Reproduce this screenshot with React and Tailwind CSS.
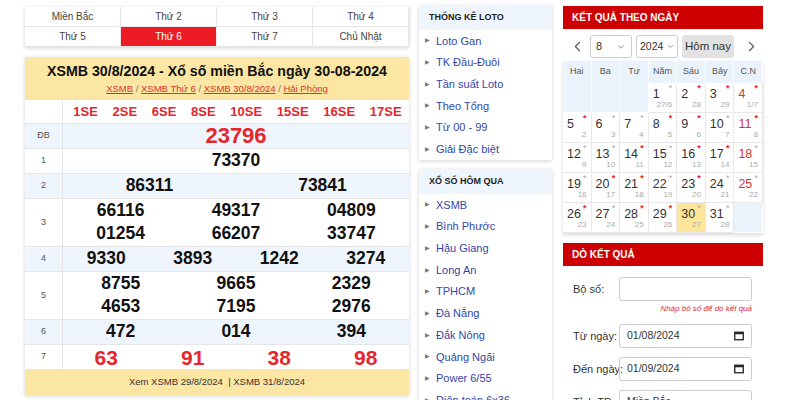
import { ChevronLeft, ChevronRight, ChevronDown } from 'lucide-react';

const font = { fontFamily: '"Liberation Sans", Arial, sans-serif' };

const tabs = ['Miền Bắc', 'Thứ 2', 'Thứ 3', 'Thứ 4', 'Thứ 5', 'Thứ 6', 'Thứ 7', 'Chủ Nhật'];
const codes = ['1SE', '2SE', '6SE', '8SE', '10SE', '15SE', '16SE', '17SE'];

const rows = [
  { label: 'ĐB', lines: [['23796']], cls: 'text-[22px] text-[#e4262d]', bg: 'bg-[#eef5fc]', h: 'h-[25px]' },
  { label: '1', lines: [['73370']], h: 'h-[25px]' },
  { label: '2', lines: [['86311', '73841']], bg: 'bg-[#eef5fc]', h: 'h-[25px]' },
  { label: '3', lines: [['66116', '49317', '04809'], ['01254', '66207', '33747']], h: 'h-[48px]' },
  { label: '4', lines: [['9330', '3893', '1242', '3274']], bg: 'bg-[#eef5fc]', h: 'h-[25px]' },
  { label: '5', lines: [['8755', '9665', '2329'], ['4653', '7195', '2976']], h: 'h-[48px]' },
  { label: '6', lines: [['472', '014', '394']], bg: 'bg-[#eef5fc]', h: 'h-[25px]' },
  { label: '7', lines: [['63', '91', '38', '98']], cls: 'text-[21px] text-[#e4262d]', h: 'h-[25px]' },
];

const loto = ['Loto Gan', 'TK Đầu-Đuôi', 'Tần suất Loto', 'Theo Tổng', 'Từ 00 - 99', 'Giải Đặc biệt'];
const homqua = ['XSMB', 'Bình Phước', 'Hậu Giang', 'Long An', 'TPHCM', 'Đà Nẵng', 'Đắk Nông', 'Quảng Ngãi', 'Power 6/55', 'Điện toán 6x36'];

const redDots = [2, 3, 4, 5, 8, 9, 11, 14, 16, 17, 20, 21, 23, 26, 28, 29];

function lunar(d) {
  if (d === 1) return '27/6';
  if (d === 2) return '28';
  if (d === 3) return '29';
  if (d === 4) return '1/7';
  return String(d - 3);
}

function Panel({ title, items }) {
  return (
    <div className="bg-white shadow-[0_1px_4px_rgba(0,0,0,0.18)]">
      <div className="h-[25px] bg-[#eef5fc] flex items-center pl-[10px] text-[9px] font-bold text-[#222]">{title}</div>
      {items.map((t) => (
        <div key={t} className="h-[21.7px] flex items-center pl-[6px] text-[11px] text-[#3346a8]">
          <span className="text-[6px] text-[#777] mr-[6px]">▶</span>
          {t}
        </div>
      ))}
    </div>
  );
}

function CalIcon() {
  return (
    <svg width="10" height="10" viewBox="0 0 10 10">
      <rect x="0.75" y="1.25" width="8.5" height="7.5" fill="none" stroke="#222" strokeWidth="1.3" />
      <rect x="0.75" y="1.25" width="8.5" height="2" fill="#222" />
    </svg>
  );
}

export default function App() {
  const cells = [null, null, null];
  for (let d = 1; d <= 31; d++) cells.push(d);
  cells.push(null);

  return (
    <div className="w-[800px] h-[400px] overflow-hidden bg-white flex items-start" style={font}>
      {/* left */}
      <div className="ml-[25px] mt-[7px] w-[384px]">
        <div className="grid grid-cols-4 shadow-[0_1px_4px_rgba(0,0,0,0.18)] bg-white">
          {tabs.map((t) => (
            <div
              key={t}
              className={
                'h-[20px] flex items-center justify-center text-[10px] border-r border-b border-[#e6e6e6] ' +
                (t === 'Thứ 6' ? 'bg-[#ed1c24] text-white' : 'text-[#444]')
              }
            >
              {t}
            </div>
          ))}
        </div>

        <div className="mt-[10px] shadow-[0_1px_4px_rgba(0,0,0,0.18)]">
          <div className="h-[43px] bg-[#fbe6a3] flex flex-col items-center justify-center">
            <div className="text-[14.2px] font-bold text-[#111] leading-none">XSMB 30/8/2024 - Xổ số miền Bắc ngày 30-08-2024</div>
            <div className="mt-[6px] text-[9.5px] text-[#777] leading-none">
              <span className="text-[#d9342b] underline">XSMB</span> /{' '}
              <span className="text-[#d9342b] underline">XSMB Thứ 6</span> /{' '}
              <span className="text-[#d9342b] underline">XSMB 30/8/2024</span> /{' '}
              <span className="text-[#d9342b] underline">Hải Phòng</span>
            </div>
          </div>

          <div className="h-[24px] flex bg-white border-b border-[#e6e6e6]">
            <div className="w-[38px] border-r border-[#e6e6e6]" />
            <div className="flex-1 flex justify-around items-center text-[13px] font-bold text-[#e4262d] pl-[3px]">
              {codes.map((c) => (
                <span key={c}>{c}</span>
              ))}
            </div>
          </div>

          {rows.map((r) => (
            <div key={r.label} className={'flex border-b border-[#e6e6e6] ' + r.h + ' ' + (r.bg || 'bg-white')}>
              <div className="w-[38px] flex items-center justify-center text-[9px] text-[#555] border-r border-[#e6e6e6]">{r.label}</div>
              <div className="flex-1 flex flex-col justify-center">
                {r.lines.map((line, li) => (
                  <div key={li} className={'flex h-[23px] items-center font-bold ' + (r.cls || 'text-[17.5px] text-[#111]')}>
                    {line.map((n, ni) => (
                      <span key={ni} className="flex-1 text-center leading-none">{n}</span>
                    ))}
                  </div>
                ))}
              </div>
            </div>
          ))}

          <div className="h-[25px] bg-[#fbe6a3] flex items-center justify-center text-[9.5px] text-[#333]">
            Xem XSMB 29/8/2024&nbsp;&nbsp;| XSMB 31/8/2024
          </div>
        </div>
      </div>

      {/* middle */}
      <div className="ml-[10px] mt-[5px] w-[133px] flex flex-col gap-[9px]">
        <Panel title="THỐNG KÊ LOTO" items={loto} />
        <Panel title="XỔ SỐ HÔM QUA" items={homqua} />
      </div>

      {/* right */}
      <div className="ml-[11px] mt-[6px] w-[200px]">
        <div className="h-[23px] bg-[#cc0000] flex items-center pl-[9px] text-[10px] font-bold text-white">KẾT QUẢ THEO NGÀY</div>
        <div className="h-[29px] mt-[3px] flex items-center text-[11px] text-[#333]">
          <ChevronLeft size={17} strokeWidth={1.5} className="ml-[6px] text-[#555]" />
          <div className="ml-[4px] w-[42px] h-[23px] border border-[#ccc] rounded-[3px] flex items-center justify-between px-[5px]">
            <span>8</span>
            <ChevronDown size={10} className="text-[#777]" />
          </div>
          <div className="ml-[4px] w-[42px] h-[23px] border border-[#ccc] rounded-[3px] flex items-center justify-between pl-[3px] pr-[2px] text-[10.5px]">
            <span>2024</span>
            <ChevronDown size={9} className="text-[#777]" />
          </div>
          <div className="ml-[4px] w-[52px] h-[23px] bg-[#e2e2e2] rounded-[3px] flex items-center justify-center text-[11.5px]">Hôm nay</div>
          <ChevronRight size={17} strokeWidth={1.5} className="ml-[9px] text-[#555]" />
        </div>

        <div className="shadow-[0_2px_4px_rgba(0,0,0,0.15)]">
          <div className="grid grid-cols-7 h-[22px] bg-[#eaf3fc] text-[9px] text-[#555]">
            {['Hai', 'Ba', 'Tư', 'Năm', 'Sáu', 'Bảy', 'C.N'].map((d) => (
              <div key={d} className="flex items-center justify-center border-r border-white">{d}</div>
            ))}
          </div>
          <div className="grid grid-cols-7">
            {cells.map((d, i) => {
              if (d === null)
                return <div key={i} className="h-[30px] bg-[#eaf3fc] border-r border-b border-white" />;
              const sunday = i % 7 === 6;
              return (
                <div
                  key={i}
                  className={
                    'h-[30px] relative border-r border-b border-[#e8e8e8] ' + (d === 30 ? 'bg-[#fde69a]' : 'bg-white')
                  }
                >
                  <span className={'absolute left-[4px] top-[5px] text-[12.5px] leading-none ' + (sunday ? 'text-[#d9342b]' : 'text-[#333]')}>
                    {d}
                  </span>
                  <span
                    className={
                      'absolute right-[4px] top-[1px] text-[9px] leading-none ' +
                      (redDots.includes(d) ? 'text-[#e4262d] font-bold' : 'text-[#aaa]')
                    }
                  >
                    *
                  </span>
                  <span className="absolute right-[4px] bottom-[3px] text-[8px] leading-none text-[#aaa]">{lunar(d)}</span>
                </div>
              );
            })}
          </div>
        </div>

        <div className="mt-[10px] h-[23px] bg-[#cc0000] flex items-center pl-[9px] text-[10px] font-bold text-white">DÒ KẾT QUẢ</div>
        <div className="pl-[10px] pr-[11px] text-[11px] text-[#333]">
          <div className="flex items-center mt-[11px]">
            <span className="w-[46px] whitespace-nowrap">Bộ số:</span>
            <div className="flex-1 h-[24px] border border-[#ccc] rounded-[3px]" />
          </div>
          <div className="text-right text-[8px] leading-[10px] italic text-[#e4262d] mt-[3px]">Nhập bộ số để dò kết quả</div>
          <div className="flex items-center mt-[10px]">
            <span className="w-[46px] whitespace-nowrap">Từ ngày:</span>
            <div className="flex-1 h-[24px] border border-[#ccc] rounded-[3px] flex items-center justify-between px-[7px] text-[10.5px]">
              <span>01/08/2024</span>
              <CalIcon />
            </div>
          </div>
          <div className="flex items-center mt-[9px]">
            <span className="w-[46px] whitespace-nowrap">Đến ngày:</span>
            <div className="flex-1 h-[24px] border border-[#ccc] rounded-[3px] flex items-center justify-between px-[7px] text-[10.5px]">
              <span>01/09/2024</span>
              <CalIcon />
            </div>
          </div>
          <div className="flex items-center mt-[9px]">
            <span className="w-[46px] whitespace-nowrap">Tỉnh TP:</span>
            <div className="flex-1 h-[24px] border border-[#ccc] rounded-[3px] flex items-center justify-between px-[7px] text-[10.5px]">
              <span>Miền Bắc</span>
              <ChevronDown size={10} className="text-[#777]" />
            </div>
          </div>
        </div>
      </div>
    </div>
  );
}
